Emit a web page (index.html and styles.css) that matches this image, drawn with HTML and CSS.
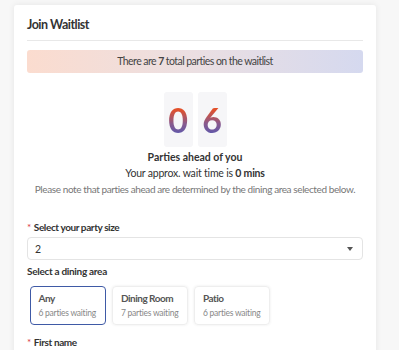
FILE: index.html
```html
<!DOCTYPE html>
<html>
<head>
<meta charset="utf-8">
<link rel="stylesheet" href="styles.css">
</head>
<body>
<div class="card">
  <h2 class="title">Join Waitlist</h2>
  <div class="banner">There are <b>7</b> total parties on the waitlist</div>
  <div class="counter">
    <div class="digit"><span>0</span></div>
    <div class="digit"><span>6</span></div>
  </div>
  <div class="ahead">Parties ahead of you</div>
  <div class="wait">Your approx. wait time is <b>0 mins</b></div>
  <div class="note">Please note that parties ahead are determined by the dining area selected below.</div>

  <div class="label"><span class="req">*</span>Select your party size</div>
  <div class="select"><span>2</span><span class="caret"></span></div>

  <div class="label plain">Select a dining area</div>
  <div class="areas">
    <div class="area active"><div class="aname">Any</div><div class="asub">6 parties waiting</div></div>
    <div class="area"><div class="aname">Dining Room</div><div class="asub">7 parties waiting</div></div>
    <div class="area"><div class="aname">Patio</div><div class="asub">6 parties waiting</div></div>
  </div>

  <div class="label first"><span class="req">*</span>First name</div>
</div>
</body>
</html>
```
FILE: styles.css
```css
html, body { margin: 0; padding: 0; }
body {
  background: #f7f7f7;
  font-family: Lato, "Noto Sans", sans-serif;
  color: #333;
  width: 399px;
  height: 350px;
  overflow: hidden;
}
.card {
  background: #fff;
  margin: 5px 0 0 14px;
  width: 336px;
  padding: 0 13px;
  height: 360px;
  box-shadow: 0 0 6px rgba(0,0,0,0.08);
  border-radius: 3px;
}
.title {
  margin: 0;
  padding: 12px 0 7px;
  font-size: 12.5px;
  font-weight: 700;
  line-height: 16px;
  border-bottom: 1px solid #e8e8e8;
  color: #333;
  letter-spacing: -0.5px;
}
.banner {
  margin-top: 9px;
  height: 23px;
  line-height: 23px;
  border-radius: 3px;
  background: linear-gradient(90deg, #fbdccf 0%, #ebdfe2 50%, #d5d9ef 100%);
  text-align: center;
  font-size: 10.5px;
  letter-spacing: -0.55px;
  color: #444;
}
.banner b { font-weight: 700; }
.counter {
  display: flex;
  justify-content: center;
  gap: 5px;
  margin-top: 19px;
}
.digit {
  width: 29px;
  height: 55px;
  background: #f6f6f8;
  border-radius: 3px;
  display: flex;
  align-items: center;
  justify-content: center;
}
.digit span {
  font-size: 34px;
  font-weight: 700;
  line-height: 1;
  background: linear-gradient(180deg, #e2502a 20%, #8a5a8c 60%, #6058aa 90%);
  -webkit-background-clip: text;
  background-clip: text;
  color: transparent;
}
.ahead {
  text-align: center;
  font-size: 10.5px;
  font-weight: 700;
  margin-top: 3px;
  line-height: 15px;
}
.wait {
  text-align: center;
  font-size: 10.5px;
  letter-spacing: -0.2px;
  line-height: 15px;
  margin-top: 1px;
}
.wait b { font-weight: 700; }
.note {
  text-align: center;
  font-size: 10px;
  letter-spacing: -0.4px;
  line-height: 15px;
  color: #777;
  margin-top: 1px;
  white-space: nowrap;
}
.label {
  font-size: 10px;
  font-weight: 700;
  margin-top: 23px;
  line-height: 15px;
  letter-spacing: -0.4px;
}
.req { color: #d9363e; margin-right: 3px; font-weight: 400; }
.select {
  margin-top: 2px;
  height: 21px;
  border: 1px solid #e4e4e4;
  border-radius: 4px;
  display: flex;
  align-items: center;
  justify-content: space-between;
  padding: 0 9px 0 7px;
  font-size: 10.5px;
}
.caret {
  width: 0; height: 0;
  border-left: 3.5px solid transparent;
  border-right: 3.5px solid transparent;
  border-top: 4px solid #555;
}
.label.plain { margin-top: 4px; letter-spacing: -0.3px; }
.areas {
  display: flex;
  gap: 6px;
  margin-top: 7px;
  padding-left: 3px;
}
.area {
  width: 76px;
  height: 39px;
  box-sizing: border-box;
  border: 1px solid #eee;
  box-shadow: 0 0 3px rgba(0,0,0,0.08);
  border-radius: 4px;
  padding: 4px 8px 0;
}
.area.active {
  border: 1.5px solid #3f5aa6;
  box-shadow: none;
  padding: 3.5px 7.5px 0;
}
.aname { font-size: 10px; font-weight: 700; color: #555; line-height: 15px; white-space: nowrap; letter-spacing: -0.5px; }
.asub { font-size: 8.5px; color: #888; line-height: 13px; margin-top: 1px; white-space: nowrap; letter-spacing: -0.25px; }
.label.first { margin-top: 10px; }
```
